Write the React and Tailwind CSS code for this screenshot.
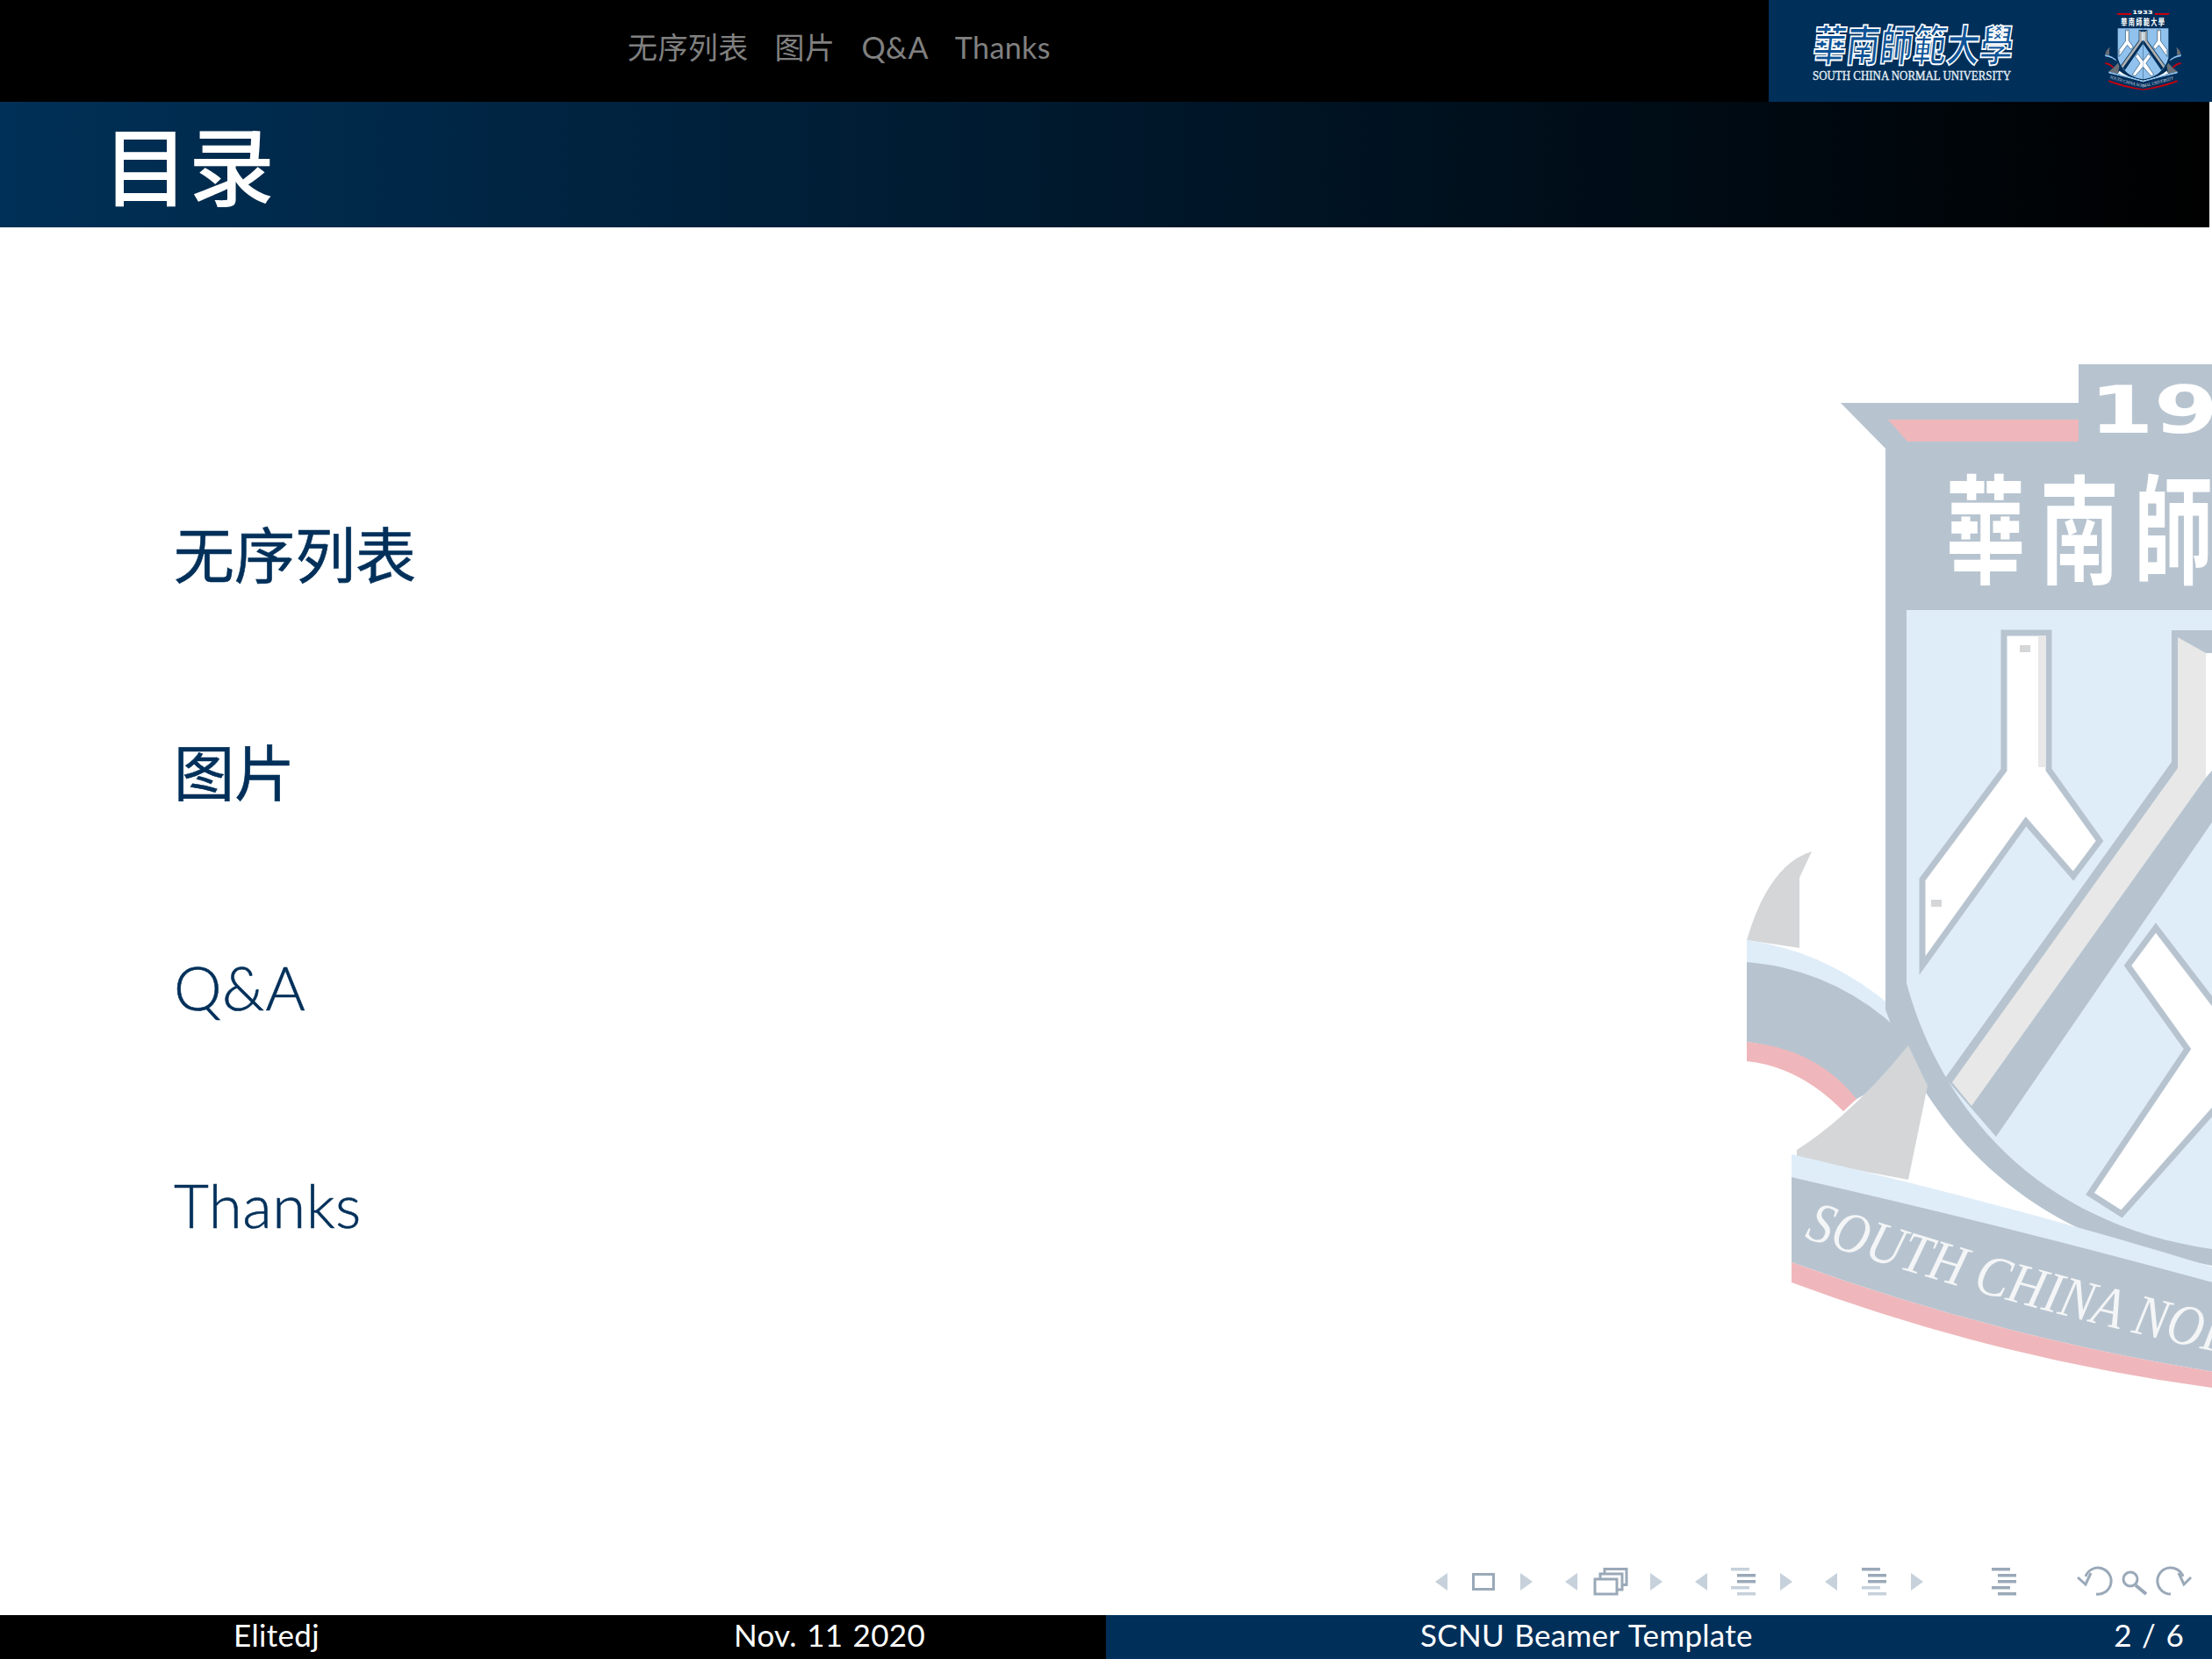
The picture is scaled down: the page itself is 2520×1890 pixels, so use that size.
import React from 'react';

const NAVY = '#002f5a';
const SKY = '#90c2ed';
const RED = '#c8000f';
const GREY = '#696f76';
const PALE = '#b0b0b0';

const sans = 'font-["Lato","Noto_Sans_CJK_SC",sans-serif]';

// one side of the crest, drawn in the big watermark's page coordinates
const CrestSide = () => (
  <g>
    {/* upper ribbon */}
    <path d="M2050 1080 L2050 1000 L2064 970 Q2015 985 1990 1071 Z" fill={GREY} />
    <path d="M1990 1071 Q2090 1085 2170 1160 L2170 1190 L1990 1096 Z" fill={SKY} />
    <path d="M1990 1096 Q2100 1105 2180 1190 L2180 1215 L2110 1255 Q2060 1195 1990 1187 Z" fill={NAVY} />
    <path d="M1990 1187 Q2070 1195 2115 1252 L2100 1266 Q2050 1215 1990 1209 Z" fill={RED} />

    {/* banner */}
    <path d="M2097 459 L2368 459 L2368 415 L2535 415 L2535 1445 C2300 1420 2190 1270 2148 1150 L2148 511 Z" fill={NAVY} />
    <path d="M2151 478 L2368 478 L2368 503 L2173 503 Z" fill={RED} />

    {/* shield field */}
    <path d="M2172 695 L2535 695 L2535 1425 C2320 1400 2210 1260 2172 1120 Z" fill={SKY} />

    {/* chevron */}
    <path d="M2216 1228 L2474 868 L2474 718 L2535 718 L2535 915 L2274 1295 Z" fill={NAVY} />
    <path d="M2224 1233 L2481 875 L2481 726 L2513 744 L2513 886 L2246 1260 Z" fill={PALE} />
    <path d="M2513 744 L2535 744 L2535 860 L2513 886 Z" fill="#fff" />

    {/* left fork */}
    <path
      d="M2283 721 L2334 721 L2334 877 L2392 958 L2362 998 L2308 936 L2190 1100 L2190 1002 L2283 877 Z"
      fill="#fff"
      stroke={NAVY}
      strokeWidth="7"
    />
    <rect x="2322" y="724" width="9" height="150" fill={PALE} />
    <rect x="2301" y="735" width="12" height="8" fill={GREY} />
    <rect x="2200" y="1025" width="12" height="8" fill={GREY} />

    {/* lower cross */}
    <path
      d="M2535 1160 L2456 1057 L2424 1100 L2492 1195 L2381 1360 L2417 1383 L2535 1250"
      fill="#fff"
      stroke={NAVY}
      strokeWidth="7"
    />

    {/* lower ribbon */}
    <path d="M2174 1344 L2196 1237 L2174 1191 Q2110 1270 2047 1310 L2047 1320 Z" fill={GREY} />
    <path d="M2174 1344 L2196 1306 Q2300 1400 2535 1445 L2535 1465 Q2300 1395 2174 1344 Z" fill="#fff" />
    <path d="M2041 1315 Q2300 1375 2535 1448 L2535 1466 Q2300 1400 2041 1341 Z" fill={SKY} />
    <path d="M2041 1341 Q2300 1400 2535 1465 L2535 1565 Q2280 1525 2041 1438 Z" fill={NAVY} />
    <path d="M2041 1438 Q2280 1525 2535 1565 L2535 1583 Q2280 1550 2041 1461 Z" fill={RED} />
  </g>
);

const Crest = ({ uid, className }) => (
  <svg viewBox="1990 415 1090 1170" className={className}>
    <CrestSide />
    <g transform="matrix(-1 0 0 1 5070 0)">
      <CrestSide />
    </g>
    <text
      x="2380"
      y="493"
      fill="#fff"
      fontFamily="DejaVu Sans"
      fontWeight="700"
      fontSize="74"
      textLength="295"
      lengthAdjust="spacingAndGlyphs"
    >
      1933
    </text>
    <text
      transform="translate(2217 655) scale(1 1.5)"
      fill="#fff"
      fontFamily="Noto Sans CJK TC"
      fontWeight="700"
      fontSize="90"
      letterSpacing="17"
    >
      華南師範大學
    </text>
    <path id={uid} d="M2055 1410 Q2300 1492 2535 1542 Q2770 1492 3015 1410" fill="none" />
    <text fill="#d8dde2" fontFamily="Liberation Serif" fontStyle="italic" fontSize="66">
      <textPath href={`#${uid}`} textLength="950" lengthAdjust="spacingAndGlyphs">
        SOUTH CHINA NORMAL UNIVERSITY
      </textPath>
    </text>
  </svg>
);

const Tri = ({ x, dir, fill = '#c6d1db' }) => (
  <path d={dir === 'l' ? `M${x + 14} 1792 L${x} 1802 L${x + 14} 1812 Z` : `M${x} 1792 L${x + 14} 1802 L${x} 1812 Z`} fill={fill} />
);

const Bars = ({ x, shades }) => {
  const rows = [
    [0, 1786],
    [7, 1793],
    [7, 1800],
    [0, 1807],
    [7, 1814],
  ];
  return rows.map(([dx, y], i) => <rect key={y} x={x + dx} y={y} width="21" height="3.5" fill={shades[i]} />);
};

const DARK = '#9aa9b8';
const LIGHT = '#c6d1db';

const NavSymbols = () => (
  <svg viewBox="1630 1780 870 45" className="w-[870px] h-[45px]">
    <Tri x={1635} dir="l" />
    <rect x="1678.5" y="1793.5" width="23" height="17" fill="none" stroke={DARK} strokeWidth="3" />
    <Tri x={1732} dir="r" />

    <Tri x={1783} dir="l" />
    <g fill="#fff" stroke={DARK} strokeWidth="3">
      <rect x="1828" y="1787.5" width="25" height="18" />
      <rect x="1823" y="1793" width="25" height="18" />
      <rect x="1817" y="1799" width="25" height="17" />
    </g>
    <Tri x={1880} dir="r" />

    <Tri x={1931} dir="l" />
    <Bars x={1972} shades={[LIGHT, DARK, DARK, LIGHT, LIGHT]} />
    <Tri x={2028} dir="r" />

    <Tri x={2079} dir="l" />
    <Bars x={2121} shades={[DARK, DARK, DARK, LIGHT, LIGHT]} />
    <Tri x={2177} dir="r" />

    <Bars x={2269} shades={[DARK, DARK, DARK, DARK, DARK]} />

    <g fill="none" stroke={DARK} strokeWidth="3">
      <path d="M2388 1816 A15 15 0 1 0 2376 1796" />
      <path d="M2367 1797 L2376 1805 L2382 1792" />
      <circle cx="2427" cy="1799" r="8" />
      <path d="M2433 1806 L2445 1816" strokeWidth="4" />
      <path d="M2473 1816 A15 15 0 1 1 2487 1796" />
      <path d="M2482 1792 L2488 1805 L2496 1797" />
    </g>
  </svg>
);

const App = () => {
  const sections = ['无序列表', '图片', 'Q&A', 'Thanks'];

  return (
    <div className={`relative w-[2520px] h-[1890px] overflow-hidden bg-white flex flex-col ${sans}`}>
      <Crest uid="mark" className="absolute left-[1990px] top-[415px] w-[1090px] h-[1170px] opacity-[0.28]" />

      <header className="relative h-[116px] bg-black flex">
        <nav className="flex-1 pl-[715px] pb-[9px] flex items-center gap-[30px] text-[34px] tracking-[0.4px] text-[#808080]">
          {sections.map((s) => (
            <span key={s}>{s}</span>
          ))}
        </nav>
        <div className="w-[505px] bg-[#002f5a] flex items-center">
          <svg viewBox="0 0 260 116" className="w-[260px] h-[116px] ml-[40px]">
            <text
              transform="translate(9 70) skewX(-6) scale(1 1.3)"
              fill="#0d5296"
              stroke="#fff"
              strokeWidth="1.4"
              fontFamily="Noto Sans CJK TC"
              fontWeight="700"
              fontSize="38"
            >
              華南師範大學
            </text>
            <text
              x="10"
              y="91"
              fill="#dfe8f0"
              stroke="#fff"
              strokeWidth="0.3"
              fontFamily="Liberation Serif"
              fontSize="14"
              textLength="226"
              lengthAdjust="spacingAndGlyphs"
            >
              SOUTH CHINA NORMAL UNIVERSITY
            </text>
          </svg>
          <Crest uid="badge" className="w-[87px] h-[93px] ml-[83px] mb-[3px]" />
        </div>
      </header>

      <div className="relative h-[143px] w-[2517px] bg-[linear-gradient(to_right,#003057,#000)] flex items-center pl-[117px] pt-[3px]">
        <h1 className="text-[98px] font-medium text-white leading-none">目录</h1>
      </div>

      <main className="relative flex-1 pl-[198px] pt-[374px] text-[69px] text-[#00305a]">
        {sections.map((s, i) => (
          <div key={s} className="h-[247.5px] flex items-start leading-[0]">
            <span
              className={
                i < 2
                  ? 'font-normal [-webkit-text-stroke:0.6px_#00305a]'
                  : 'font-light tracking-[0.5px] [-webkit-text-stroke:0.6px_#00305a] -mt-[3px]'
              }
            >
              {s}
            </span>
          </div>
        ))}
      </main>

      <div className="relative flex justify-end pr-[20px] pb-[15px]">
        <NavSymbols />
      </div>

      <footer className="relative h-[50px] flex text-[35px] text-white tracking-[0.3px] [word-spacing:2px] pb-[5px] bg-black">
        <div className="w-[630px] flex items-center justify-center">Elitedj</div>
        <div className="w-[630px] flex items-center justify-center">Nov. 11 2020</div>
        <div className="flex-1 bg-[#002f5a] -mb-[5px] pb-[5px] flex items-center justify-between pl-[358px] pr-[32px]">
          <span>SCNU Beamer Template</span>
          <span>2 / 6</span>
        </div>
      </footer>
    </div>
  );
};

export default App;
